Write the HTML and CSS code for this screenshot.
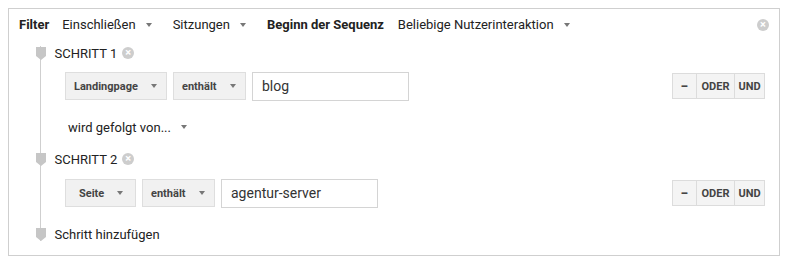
FILE: index.html
```html
<!DOCTYPE html>
<html lang="de">
  <head>
    <meta charset="utf-8" />
    <title>Filter</title>
    <link rel="stylesheet" href="styles.css">
  </head>
  <body>
    <div class="panel">
      <div class="filter-bar">
        <b class="label">Filter</b>
        <span class="drop">Einschließen <i class="caret"></i></span>
        <span class="drop">Sitzungen <i class="caret"></i></span>
        <b class="label label-seq">Beginn der Sequenz</b>
        <span class="drop">Beliebige Nutzerinteraktion <i class="caret"></i></span>
        <span class="close close-main">&times;</span>
      </div>

      <div class="steps">
        <div class="step-head">
          <svg class="marker" width="10" height="13" viewBox="0 0 10 13"><polygon points="0,0 10,0 10,9 5,13 0,9" /></svg>
          <span>SCHRITT 1</span>
          <span class="close">&times;</span>
        </div>
        <div class="cond">
          <span class="btn btn-dim">Landingpage <i class="caret"></i></span>
          <span class="btn btn-op">enthält <i class="caret"></i></span>
          <span class="field field-1">blog</span>
          <div class="logic">
            <span class="cell cell-minus">&minus;</span>
            <span class="cell cell-or">ODER</span>
            <span class="cell cell-and">UND</span>
          </div>
        </div>
        <div class="follow">wird gefolgt von... <i class="caret"></i></div>

        <div class="step-head step-2">
          <svg class="marker" width="10" height="13" viewBox="0 0 10 13"><polygon points="0,0 10,0 10,9 5,13 0,9" /></svg>
          <span>SCHRITT 2</span>
          <span class="close">&times;</span>
        </div>
        <div class="cond cond-2">
          <span class="btn btn-page">Seite <i class="caret"></i></span>
          <span class="btn btn-op">enthält <i class="caret"></i></span>
          <span class="field field-2">agentur-server</span>
          <div class="logic">
            <span class="cell cell-minus">&minus;</span>
            <span class="cell cell-or">ODER</span>
            <span class="cell cell-and">UND</span>
          </div>
        </div>

        <div class="step-head step-add">
          <svg class="marker" width="10" height="13" viewBox="0 0 10 13"><polygon points="0,0 10,0 10,9 5,13 0,9" /></svg>
          <span>Schritt hinzufügen</span>
        </div>
      </div>
    </div>
  </body>
</html>
```

FILE: styles.css
```css
body {
  margin: 0;
  background: #fff;
  color: #222;
  font-family: Roboto, "Liberation Sans", sans-serif;
  font-size: 13px;
}

.panel {
  margin: 8px;
  width: 770px;
  height: 246px;
  border: 1px solid #cfcfcf;
}

.filter-bar {
  display: flex;
  align-items: center;
  height: 16px;
  padding: 8px 10px 0 10px;
  line-height: 16px;
}

.label {
  font-weight: bold;
  margin-right: 13px;
}

.label-seq {
  margin-right: 14px;
}

.drop {
  display: flex;
  align-items: center;
  margin-right: 21px;
}

.caret {
  display: inline-block;
  width: 0;
  height: 0;
  margin-left: 10px;
  border-left: 3.5px solid transparent;
  border-right: 3.5px solid transparent;
  border-top: 4px solid #777;
}

.close {
  display: inline-flex;
  align-items: center;
  justify-content: center;
  width: 12px;
  height: 12px;
  border-radius: 50%;
  background: #cdcdcd;
  color: #fff;
  font-size: 11px;
  line-height: 12px;
  font-weight: bold;
}

.close-main {
  margin-left: auto;
  margin-right: 0;
}

.steps {
  margin: 13px 0 0 31px;
  border-left: 1px solid #cfcfcf;
  height: 195px;
}

.step-head {
  display: flex;
  align-items: center;
  height: 16px;
  line-height: 16px;
}

.marker {
  fill: #c6c6c6;
  margin-left: -5.5px;
  margin-right: 9px;
  margin-top: -1px;
}

.step-head .close {
  margin-left: 5px;
  margin-top: -2px;
}

.cond {
  display: flex;
  align-items: center;
  margin: 10px 0 0 24px;
  padding-right: 14px;
  height: 28px;
}

.btn {
  display: flex;
  align-items: center;
  box-sizing: border-box;
  height: 28px;
  padding: 0 9px 0 8px;
  margin-right: 6px;
  background: #f1f1f1;
  border: 1px solid #dedede;
  font-size: 11px;
  font-weight: bold;
  color: #444;
}

.btn .caret {
  margin-left: auto;
}

.btn-dim { width: 102px; }
.btn-op { width: 73px; }
.btn-page { width: 71px; padding-left: 13px; padding-right: 12px; }

.field {
  display: flex;
  align-items: center;
  box-sizing: border-box;
  height: 29px;
  padding-left: 9px;
  border: 1px solid #d4d4d4;
  font-size: 14px;
  color: #333;
}

.field-1 { width: 157px; }
.field-2 { width: 157px; }

.logic {
  display: flex;
  margin-left: auto;
  height: 26px;
}

.cell {
  display: flex;
  align-items: center;
  justify-content: center;
  box-sizing: border-box;
  height: 26px;
  background: #f4f4f4;
  border: 1px solid #dcdcdc;
  margin-left: -1px;
  font-size: 11px;
  font-weight: bold;
  color: #444;
}

.cell-minus { width: 25px; font-size: 14px; }
.cell-or { width: 39px; }
.cell-and { width: 31px; }

.follow {
  display: flex;
  align-items: center;
  height: 16px;
  margin: 19px 0 0 27px;
}

.step-2 {
  margin-top: 17px;
}

.cond-2 {
  margin-top: 11px;
}

.step-add {
  margin-top: 20px;
}
```
